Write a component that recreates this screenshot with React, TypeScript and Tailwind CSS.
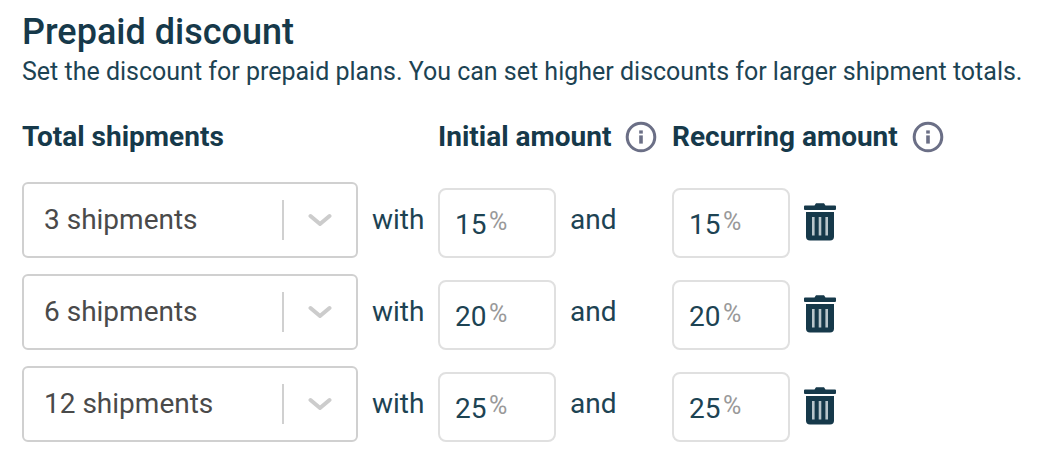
import { useState } from "react";

type Plan = {
  id: number;
  shipments: number;
  initial: string;
  recurring: string;
};

const shipmentOptions = [3, 6, 12];

const defaultPlans: Plan[] = [
  { id: 1, shipments: 3, initial: "15", recurring: "15" },
  { id: 2, shipments: 6, initial: "20", recurring: "20" },
  { id: 3, shipments: 12, initial: "25", recurring: "25" },
];

function InfoIcon() {
  return (
    <svg viewBox="0 0 32 32" className="h-8 w-8" fill="none" aria-hidden="true">
      <circle cx="16" cy="16" r="13.8" stroke="#6b6f86" strokeWidth="3" />
      <rect x="14.2" y="9.4" width="3.6" height="3.2" fill="#6b6f86" />
      <rect x="14.2" y="14.4" width="3.6" height="8.2" fill="#6b6f86" />
    </svg>
  );
}

function TrashIcon() {
  return (
    <svg viewBox="0 0 34 40" className="h-10 w-[34px]" fill="#16394a" aria-hidden="true">
      <path d="M2 3.5h9.5L13 1.2h8l1.5 2.3H32a1 1 0 0 1 1 1v2.6a1 1 0 0 1-1 1H2a1 1 0 0 1-1-1V4.5a1 1 0 0 1 1-1z" />
      <path d="M3 10h28v24.5a4 4 0 0 1-4 4H7a4 4 0 0 1-4-4z" />
      <g fill="#b9c5ca">
        <rect x="9" y="15" width="2.6" height="18.5" />
        <rect x="15.7" y="15" width="2.6" height="18.5" />
        <rect x="22.4" y="15" width="2.6" height="18.5" />
      </g>
    </svg>
  );
}

function ShipmentSelect({ value, onChange }: { value: number; onChange: (value: number) => void }) {
  return (
    <div className="relative w-[336px]">
      <select
        aria-label="Total shipments"
        value={value}
        onChange={(e) => onChange(Number(e.target.value))}
        className="h-[76px] w-full appearance-none rounded-md border-2 border-[#d0d0d0] bg-white pl-5 text-[28px] text-[#4a4a4a]"
      >
        {shipmentOptions.map((count) => (
          <option key={count} value={count}>
            {count} shipments
          </option>
        ))}
      </select>

      {/* Separator and chevron over the select */}
      <div className="pointer-events-none absolute inset-y-0 right-[26px] flex items-center gap-6">
        <span className="h-10 w-0.5 bg-[#d0d0d0]" />
        <svg viewBox="0 0 24 14" className="h-3.5 w-6" fill="none" aria-hidden="true">
          <path d="M2.5 3l9.5 8 9.5-8" stroke="#cccccc" strokeWidth="4" strokeLinecap="round" strokeLinejoin="round" />
        </svg>
      </div>
    </div>
  );
}

function PercentInput({ label, value, onChange }: { label: string; value: string; onChange: (value: string) => void }) {
  return (
    <label className="flex h-[70px] w-[118px] items-center rounded-lg border-2 border-[#e0e0e0] bg-white pl-[15px]">
      <input
        aria-label={label}
        inputMode="numeric"
        maxLength={2}
        value={value}
        onChange={(e) => onChange(e.target.value)}
        className="w-[34px] pt-1 text-[28px] text-[#1d4353] outline-none"
      />
      <span className="pb-0.5 text-[25px] text-[#999999]">%</span>
    </label>
  );
}

function App() {
  const [plans, setPlans] = useState<Plan[]>(defaultPlans);

  const updatePlan = (id: number, changes: Partial<Plan>) => {
    setPlans(plans.map((plan) => (plan.id === id ? { ...plan, ...changes } : plan)));
  };

  const removePlan = (id: number) => {
    setPlans(plans.filter((plan) => plan.id !== id));
  };

  return (
    <main className="min-h-screen bg-white px-[22px] pt-2 pb-4 font-[Roboto,sans-serif] text-[#1d4353]">
      <h1 className="text-[36px] leading-[48px] font-medium text-[#16394a]">Prepaid discount</h1>
      <p className="text-[25px] leading-8 whitespace-nowrap">
        Set the discount for prepaid plans. You can set higher discounts for larger shipment totals.
      </p>

      <table className="mt-5 text-left text-[28px]">
        <thead>
          <tr className="h-[58px] font-bold text-[#16394a]">
            <th className="w-[416px]">Total shipments</th>
            <th className="w-[234px]">
              <div className="flex items-center gap-3.5 whitespace-nowrap">
                Initial amount
                <InfoIcon />
              </div>
            </th>
            <th>
              <div className="flex items-center gap-3.5 whitespace-nowrap">
                Recurring amount
                <InfoIcon />
              </div>
            </th>
          </tr>
        </thead>

        <tbody>
          {plans.map((plan) => (
            <tr key={plan.id}>
              <td className="pt-4">
                <div className="flex items-center gap-3.5">
                  <ShipmentSelect
                    value={plan.shipments}
                    onChange={(shipments) => updatePlan(plan.id, { shipments })}
                  />
                  <span>with</span>
                </div>
              </td>
              <td className="pt-4">
                <div className="flex items-end gap-3.5">
                  <PercentInput
                    label="Initial amount"
                    value={plan.initial}
                    onChange={(initial) => updatePlan(plan.id, { initial })}
                  />
                  <span className="flex h-[76px] items-center">and</span>
                </div>
              </td>
              <td className="pt-4">
                <div className="flex h-[76px] items-end gap-[13px]">
                  <PercentInput
                    label="Recurring amount"
                    value={plan.recurring}
                    onChange={(recurring) => updatePlan(plan.id, { recurring })}
                  />
                  <button
                    type="button"
                    aria-label="Remove plan"
                    onClick={() => removePlan(plan.id)}
                    className="flex h-[72px] items-center"
                  >
                    <TrashIcon />
                  </button>
                </div>
              </td>
            </tr>
          ))}
        </tbody>
      </table>
    </main>
  );
}

export default App;
